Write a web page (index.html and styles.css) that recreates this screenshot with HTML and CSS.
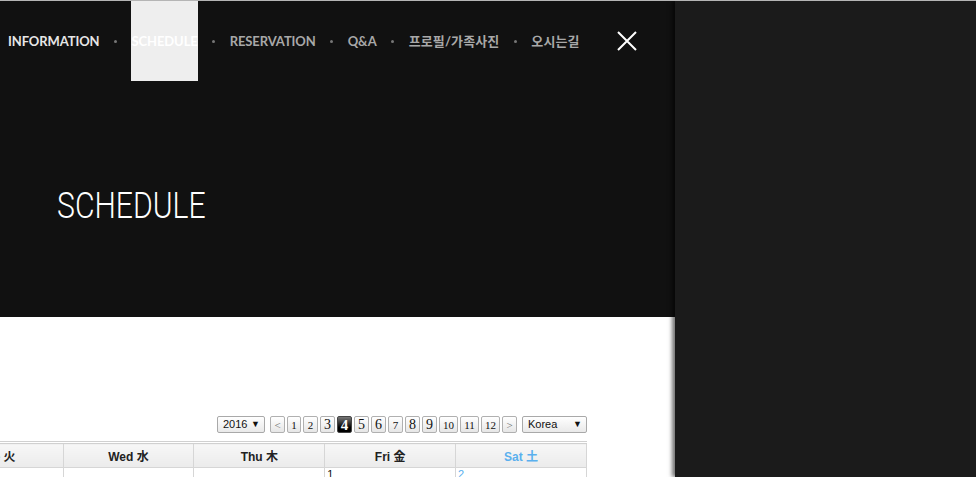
FILE: index.html
```html
<!DOCTYPE html>
<html lang="ko">
<head>
<meta charset="utf-8">
<title>SCHEDULE</title>
<link rel="stylesheet" href="styles.css">
</head>
<body>
<div class="page">
  <div class="main">
    <header class="hero">
      <nav class="nav">
        <a class="nav-item">INFORMATION</a>
        <span class="dot"></span>
        <a class="nav-item active">SCHEDULE</a>
        <span class="dot"></span>
        <a class="nav-item">RESERVATION</a>
        <span class="dot"></span>
        <a class="nav-item">Q&amp;A</a>
        <span class="dot"></span>
        <a class="nav-item ko">프로필/가족사진</a>
        <span class="dot"></span>
        <a class="nav-item ko">오시는길</a>
        <button class="close" aria-label="close">
          <svg width="20" height="20" viewBox="0 0 20 20"><path d="M1 1 L19 19 M19 1 L1 19" stroke="#fff" stroke-width="2" fill="none"/></svg>
        </button>
      </nav>
      <h1 class="hero-title"><span>SCHEDULE</span></h1>
    </header>
    <section class="calendar">
      <div class="toolbar">
        <div class="select year">2016 <span class="arrow">▼</span></div>
        <div class="pager">
          <span class="pg arrowbtn">&lt;</span>
          <span class="pg narrow">1</span>
          <span class="pg">2</span>
          <span class="pg big">3</span>
          <span class="pg current">4</span>
          <span class="pg big">5</span>
          <span class="pg big">6</span>
          <span class="pg">7</span>
          <span class="pg big">8</span>
          <span class="pg big">9</span>
          <span class="pg wide">10</span>
          <span class="pg wide">11</span>
          <span class="pg wide">12</span>
          <span class="pg arrowbtn">&gt;</span>
        </div>
        <div class="select country">Korea <span class="arrow">▼</span></div>
      </div>
      <div class="table-clip">
        <table class="cal">
          <thead>
            <tr>
              <th>Sun 日</th><th>Mon 月</th><th>Tue 火</th><th>Wed 水</th><th>Thu 木</th><th>Fri 金</th><th class="sat">Sat 土</th>
            </tr>
          </thead>
          <tbody>
            <tr>
              <td></td><td></td><td></td><td></td><td></td><td>1</td><td class="sat">2</td>
            </tr>
          </tbody>
        </table>
      </div>
    </section>
  </div>
  <aside class="side"></aside>
</div>
</body>
</html>
```
FILE: styles.css
```css
html, body {
  margin: 0;
  padding: 0;
}
body {
  background: #fff;
  border-top: 1px solid #b5b5b5;
  font-family: "Lato", "Noto Sans CJK KR", sans-serif;
  overflow: hidden;
  height: 476px;
}
.page {
  display: flex;
  height: 476px;
}
.main {
  width: 675px;
  flex: none;
  overflow: hidden;
  background: #fff;
}
.side {
  flex: 1;
  background: #1b1b1b;
  box-shadow: -3px 0 4px rgba(0, 0, 0, 0.55);
  position: relative;
}
.hero {
  background: #111;
  height: 316px;
}
.nav {
  display: flex;
  align-items: center;
  height: 80px;
  padding-left: 8px;
  gap: 14.5px;
}
.nav-item {
  font-family: "Lato", "Noto Sans CJK KR", sans-serif;
  font-weight: 700;
  font-size: 13px;
  color: #a8a8a8;
  letter-spacing: -0.1px;
  height: 80px;
  line-height: 80px;
  white-space: nowrap;
}
.nav-item.ko {
  letter-spacing: 0.1px;
}
.nav-item:first-child {
  color: #e6e6e6;
}
.nav-item.active {
  background: #eee;
  color: #fff;
}
.dot {
  width: 3px;
  height: 3px;
  border-radius: 50%;
  background: #777;
  flex: none;
}
.close {
  margin-left: 23px;
  background: none;
  border: 0;
  padding: 0;
  width: 20px;
  height: 20px;
  display: flex;
}
.hero-title {
  margin: 0;
  padding: 103px 0 0 57px;
  font-family: "Roboto", sans-serif;
  font-weight: 300;
  font-size: 37px;
  line-height: 44px;
  color: #fff;
  letter-spacing: 0;
}
.hero-title span {
  display: inline-block;
  transform: scaleX(0.815);
  transform-origin: left center;
}
.calendar {
  padding-top: 99px;
}
.toolbar {
  display: flex;
  justify-content: flex-end;
  align-items: center;
  gap: 5px;
  margin-right: 88px;
  height: 17px;
}
.select {
  height: 15px;
  border: 1px solid #a9a9a9;
  border-radius: 2px;
  background: linear-gradient(#fff, #e9e9e9);
  font-family: "Liberation Sans", Arial, sans-serif;
  font-size: 11px;
  line-height: 15px;
  color: #111;
  padding: 0 4px 0 5px;
  display: flex;
  justify-content: space-between;
  box-sizing: content-box;
}
.select .arrow {
  font-size: 9px;
}
.year { width: 37px; }
.country { width: 54px; }
.pager {
  display: flex;
  gap: 2px;
}
.pg {
  width: 13px;
  height: 15px;
  border: 1px solid #b0b0b0;
  border-radius: 2px;
  background: linear-gradient(#fff, #e6e6e6);
  font-family: "Liberation Serif", serif;
  font-size: 11px;
  line-height: 16px;
  text-align: center;
  color: #111;
}
.pg.narrow {
  width: 12px;
}
.pg.big {
  font-size: 14px;
}
.pg.wide {
  width: 17px;
  font-size: 11px;
}
.pg.arrowbtn {
  color: #666;
  width: 13px;
}
.pg.current {
  background: linear-gradient(#777, #000 70%);
  color: #fff;
  font-weight: 700;
  font-size: 15px;
  border-color: #444;
}
.table-clip {
  margin-top: 8px;
  overflow: hidden;
}
.cal {
  border-collapse: collapse;
  width: 917px;
  margin-left: -330px;
  table-layout: fixed;
  font-family: "Liberation Sans", Arial, "Noto Sans CJK KR", sans-serif;
}
.cal th {
  height: 21px;
  border: 1px solid #d6d6d6;
  border-top: 3px double #d0d0d0;
  background: linear-gradient(#f7f7f7, #ebebeb);
  font-size: 12px;
  font-weight: 700;
  color: #222;
}
.cal th.sat, .cal td.sat {
  color: #5ab0ee;
}
.cal td {
  height: 40px;
  border: 1px solid #d6d6d6;
  vertical-align: top;
  font-size: 11px;
  padding: 0 2px;
  color: #111;
}
```
